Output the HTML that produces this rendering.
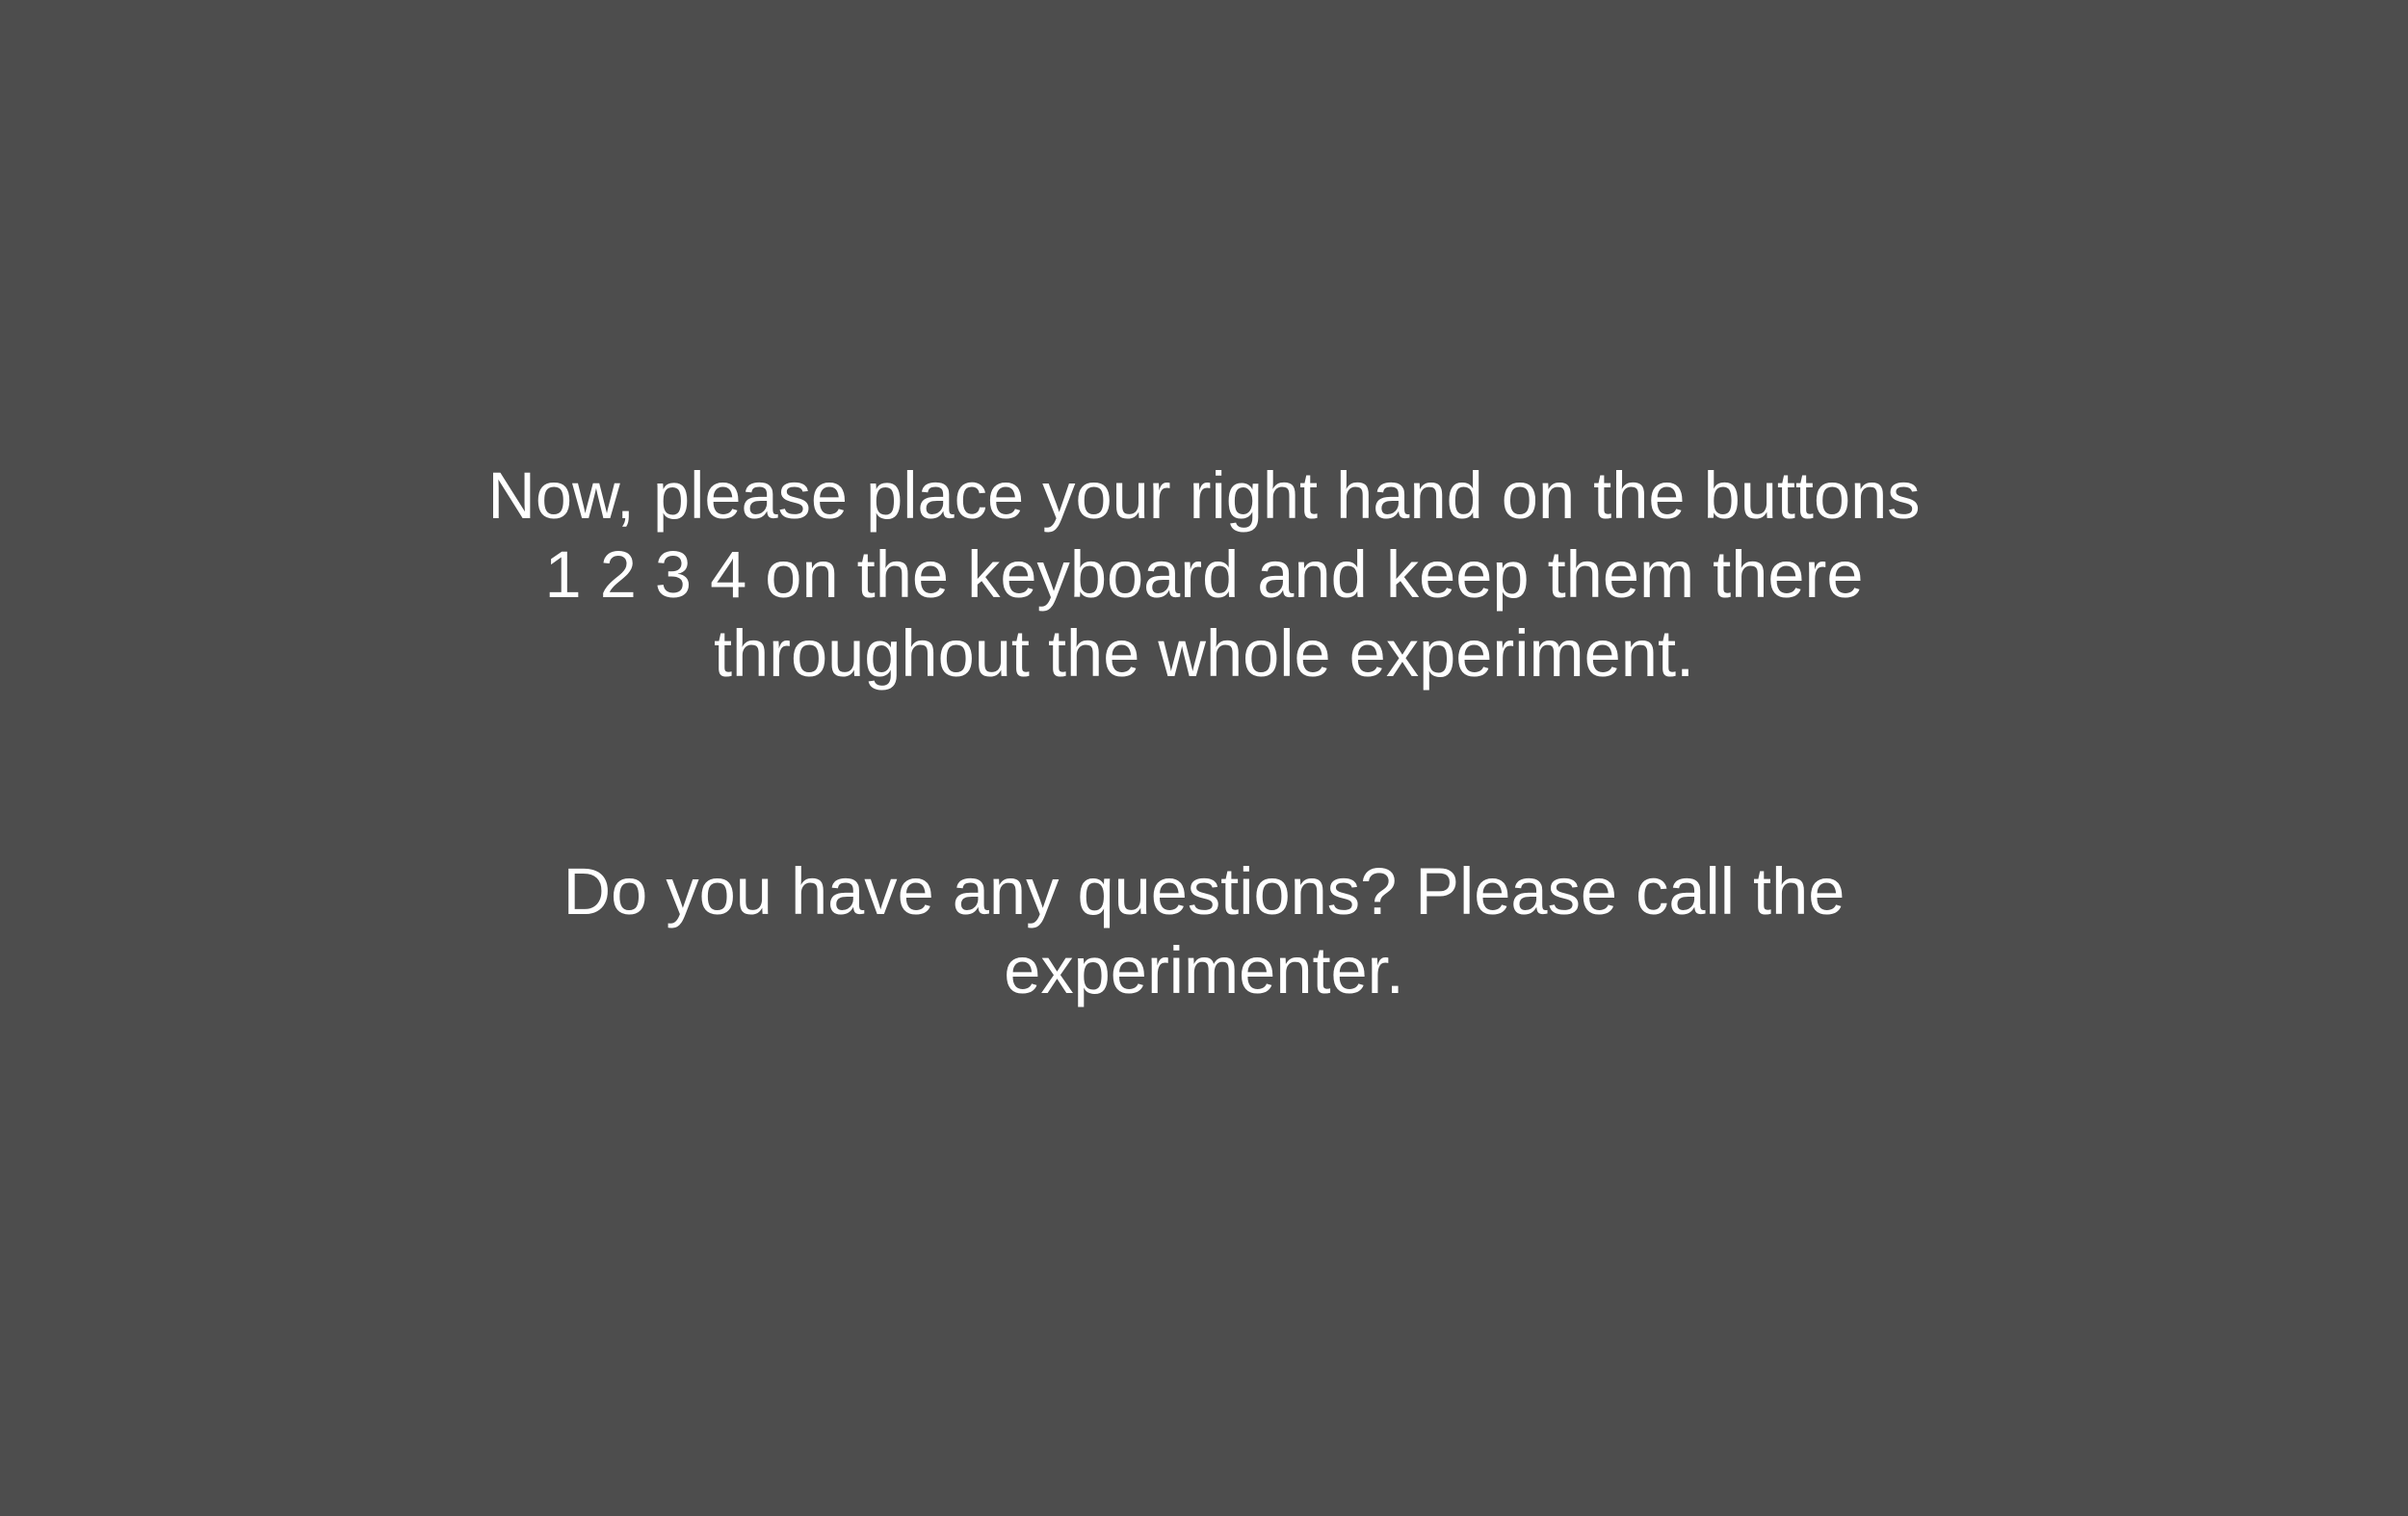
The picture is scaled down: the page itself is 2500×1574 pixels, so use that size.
<!DOCTYPE html>
<html><head><style>
html,body{margin:0;padding:0;width:2500px;height:1574px;background:#4d4d4d;overflow:hidden}
p{position:absolute;left:0;width:2500px;margin:0;text-align:center;color:#fff;font-family:"Liberation Sans",Arial,sans-serif;font-size:68.6px;line-height:82px;white-space:pre}
</style></head><body>
<p style="top:474px">Now, please place your right hand on the buttons
1 2 3 4 on the keyboard and keep them there
throughout the whole experiment.</p>
<p style="top:885px">Do you have any questions? Please call the
experimenter.</p>
</body></html>
